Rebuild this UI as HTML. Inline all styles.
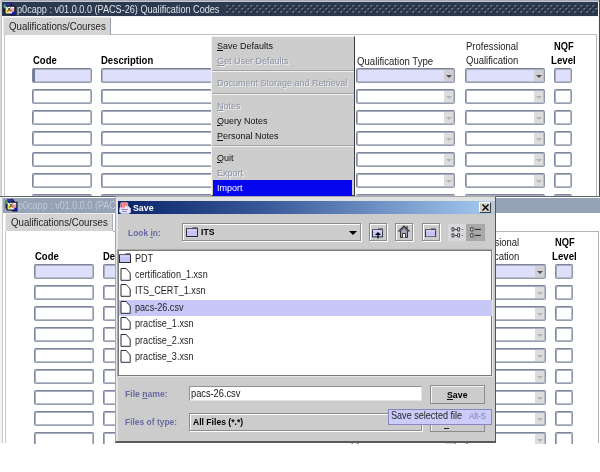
<!DOCTYPE html><html><head><meta charset="utf-8"><style>
*{margin:0;padding:0;box-sizing:border-box}
html,body{width:600px;height:472px;overflow:hidden;background:#fff;font-family:'Liberation Sans',sans-serif}
div{position:absolute}
.t{white-space:pre;transform-origin:0 0}
.fld{border:1px solid #80899e;border-color:#7c859a #8e96a8 #969db0 #80899e;border-radius:2px;box-shadow:inset 1px 1px 0 0 #a8aec0, inset -1px -1px 0 0 #b8bdca}
u{text-decoration:underline;text-underline-offset:1px}
</style></head><body>
<div style="left:0;top:0;width:600px;height:197px;overflow:hidden;background:#fff">
<div style="left:0px;top:0px;width:600px;height:2px;background:#a4a8b0"></div>
<div style="left:0px;top:0px;width:1px;height:197px;background:#d8d8d8"></div>
<div style="left:1px;top:0px;width:1px;height:197px;background:#c4c4c4"></div>
<div style="left:2px;top:2px;width:596px;height:14px;background:#2c394f"></div>
<div style="left:0px;top:1px;width:600px;height:1px;background:#c4c8d0"></div>
<div style="left:598px;top:16px;width:1px;height:181px;background:#fafafa"></div>
<div style="left:599px;top:0px;width:1px;height:197px;background:#4a4a4a"></div>
<svg style="position:absolute;left:0;top:0" width="600" height="16"><defs><pattern id="dp" width="6" height="6" patternUnits="userSpaceOnUse" x="223.5" y="2.2"><rect x="3" y="3" width="1.6" height="1.6" fill="#8e99ae"/><rect x="4.3" y="4.3" width="1.3" height="1.3" fill="#05080f"/><rect x="0" y="0" width="1.6" height="1.6" fill="#8e99ae"/><rect x="1.3" y="1.3" width="1.3" height="1.3" fill="#05080f"/></pattern></defs><rect x="225.5" y="4.5" width="372.5" height="9.5" fill="url(#dp)"/></svg>
<svg style="position:absolute;left:2px;top:2px" width="14" height="14" viewBox="0 0 14 14"><path d="M1.5 3 L4 1 L9 0.8 L10.5 3.5 L13.5 4 L13.5 13.5 L9 13.5 L7 12.5 L3 12.5 L1.5 9 Z" fill="#10142a"/><ellipse cx="2.7" cy="4.2" rx="1.3" ry="2.3" fill="#4aa06a"/><ellipse cx="6.2" cy="2.3" rx="2.8" ry="1.3" fill="#3434b4"/><rect x="3.7" y="4.8" width="8.5" height="6.7" fill="#f4f4f4"/><rect x="3.7" y="7.5" width="3.4" height="3" fill="#e8d848"/><rect x="7.5" y="6.5" width="4.4" height="3.7" fill="#f09494"/><path d="M5.5 5.5 L8.5 9 M8.5 5.5 L5.5 9.5" stroke="#333" stroke-width="0.9"/><rect x="10.2" y="9.8" width="2.8" height="2.8" fill="#1818b0"/></svg>
<div class="t" style="left:17px;top:4.06px;font-size:10.21px;line-height:11.41px;color:#dde2ea;transform:scaleX(0.8929);">p0capp : v01.0.0.0 (PACS-26) Qualification Codes</div>
<div style="left:2px;top:16px;width:596px;height:1px;background:#f4f4f4"></div>
<div style="left:3px;top:17px;width:108px;height:18px;background:#d4d4d4;border-top:1px solid #e8e8e8;border-left:1px solid #e8e8e8;border-top-right-radius:2px"></div>
<div style="left:110px;top:18px;width:1px;height:17px;background:#98a0ae"></div>
<div class="t" style="left:9.2px;top:19.59px;font-size:10.84px;line-height:12.11px;color:#1e1e1e;transform:scaleX(0.8929);">Qualifications/Courses</div>
<div style="left:111px;top:34px;width:486px;height:1px;background:#c0c0c0"></div>
<div style="left:4px;top:35px;width:1px;height:162px;background:#c4c4c4"></div>
<div style="left:596px;top:35px;width:1px;height:162px;background:#b8b8b8"></div>
<div class="t" style="left:33px;top:54.57px;font-size:10.64px;line-height:11.88px;font-weight:bold;color:#000;transform:scaleX(0.8929);">Code</div>
<div class="t" style="left:101px;top:54.57px;font-size:10.64px;line-height:11.88px;font-weight:bold;color:#000;transform:scaleX(0.8929);">Description</div>
<div class="t" style="left:357px;top:54.57px;font-size:10.75px;line-height:12.01px;color:#1a1a1a;transform:scaleX(0.8929);">Qualification Type</div>
<div class="t" style="left:466px;top:41.07px;font-size:10.64px;line-height:11.88px;color:#1a1a1a;transform:scaleX(0.8929);">Professional</div>
<div class="t" style="left:466px;top:54.57px;font-size:10.64px;line-height:11.88px;color:#1a1a1a;transform:scaleX(0.8929);">Qualification</div>
<div class="t" style="left:554px;top:41.07px;font-size:10.42px;line-height:11.63px;font-weight:bold;color:#000;transform:scaleX(0.8929);">NQF</div>
<div class="t" style="left:551px;top:54.17px;font-size:10.86px;line-height:12.14px;font-weight:bold;color:#000;transform:scaleX(0.8929);">Level</div>
<div class="fld" style="left:32px;top:68px;width:60px;height:15px;background:#dedffb"></div>
<div class="fld" style="left:101px;top:68px;width:250px;height:15px;background:#dedffb"></div>
<div class="fld" style="left:356px;top:68px;width:99px;height:15px;background:#dedffb"><div style="right:1px;top:1px;width:9px;height:11px;background:#d0d0d4"></div><div style="right:2.5px;top:5.5px;width:0;height:0;border-left:3px solid transparent;border-right:3px solid transparent;border-top:3px solid #505058"></div></div>
<div class="fld" style="left:465px;top:68px;width:80px;height:15px;background:#dedffb"><div style="right:1px;top:1px;width:9px;height:11px;background:#d0d0d4"></div><div style="right:2.5px;top:5.5px;width:0;height:0;border-left:3px solid transparent;border-right:3px solid transparent;border-top:3px solid #505058"></div></div>
<div class="fld" style="left:554px;top:68px;width:17.5px;height:15px;background:#dedffb"></div>
<div style="left:33px;top:69px;width:2px;height:13px;background:#727a92"></div>
<div class="fld" style="left:32px;top:89px;width:60px;height:15px;background:#fff"></div>
<div class="fld" style="left:101px;top:89px;width:250px;height:15px;background:#fff"></div>
<div class="fld" style="left:356px;top:89px;width:99px;height:15px;background:#fff"><div style="right:1px;top:1px;width:9px;height:11px;background:#dddddd"></div><div style="right:2.5px;top:5.5px;width:0;height:0;border-left:3px solid transparent;border-right:3px solid transparent;border-top:3px solid #b4b4b8"></div></div>
<div class="fld" style="left:465px;top:89px;width:80px;height:15px;background:#fff"><div style="right:1px;top:1px;width:9px;height:11px;background:#dddddd"></div><div style="right:2.5px;top:5.5px;width:0;height:0;border-left:3px solid transparent;border-right:3px solid transparent;border-top:3px solid #b4b4b8"></div></div>
<div class="fld" style="left:554px;top:89px;width:17.5px;height:15px;background:#fff"></div>
<div class="fld" style="left:32px;top:110px;width:60px;height:15px;background:#fff"></div>
<div class="fld" style="left:101px;top:110px;width:250px;height:15px;background:#fff"></div>
<div class="fld" style="left:356px;top:110px;width:99px;height:15px;background:#fff"><div style="right:1px;top:1px;width:9px;height:11px;background:#dddddd"></div><div style="right:2.5px;top:5.5px;width:0;height:0;border-left:3px solid transparent;border-right:3px solid transparent;border-top:3px solid #b4b4b8"></div></div>
<div class="fld" style="left:465px;top:110px;width:80px;height:15px;background:#fff"><div style="right:1px;top:1px;width:9px;height:11px;background:#dddddd"></div><div style="right:2.5px;top:5.5px;width:0;height:0;border-left:3px solid transparent;border-right:3px solid transparent;border-top:3px solid #b4b4b8"></div></div>
<div class="fld" style="left:554px;top:110px;width:17.5px;height:15px;background:#fff"></div>
<div class="fld" style="left:32px;top:131px;width:60px;height:15px;background:#fff"></div>
<div class="fld" style="left:101px;top:131px;width:250px;height:15px;background:#fff"></div>
<div class="fld" style="left:356px;top:131px;width:99px;height:15px;background:#fff"><div style="right:1px;top:1px;width:9px;height:11px;background:#dddddd"></div><div style="right:2.5px;top:5.5px;width:0;height:0;border-left:3px solid transparent;border-right:3px solid transparent;border-top:3px solid #b4b4b8"></div></div>
<div class="fld" style="left:465px;top:131px;width:80px;height:15px;background:#fff"><div style="right:1px;top:1px;width:9px;height:11px;background:#dddddd"></div><div style="right:2.5px;top:5.5px;width:0;height:0;border-left:3px solid transparent;border-right:3px solid transparent;border-top:3px solid #b4b4b8"></div></div>
<div class="fld" style="left:554px;top:131px;width:17.5px;height:15px;background:#fff"></div>
<div class="fld" style="left:32px;top:152px;width:60px;height:15px;background:#fff"></div>
<div class="fld" style="left:101px;top:152px;width:250px;height:15px;background:#fff"></div>
<div class="fld" style="left:356px;top:152px;width:99px;height:15px;background:#fff"><div style="right:1px;top:1px;width:9px;height:11px;background:#dddddd"></div><div style="right:2.5px;top:5.5px;width:0;height:0;border-left:3px solid transparent;border-right:3px solid transparent;border-top:3px solid #b4b4b8"></div></div>
<div class="fld" style="left:465px;top:152px;width:80px;height:15px;background:#fff"><div style="right:1px;top:1px;width:9px;height:11px;background:#dddddd"></div><div style="right:2.5px;top:5.5px;width:0;height:0;border-left:3px solid transparent;border-right:3px solid transparent;border-top:3px solid #b4b4b8"></div></div>
<div class="fld" style="left:554px;top:152px;width:17.5px;height:15px;background:#fff"></div>
<div class="fld" style="left:32px;top:173px;width:60px;height:15px;background:#fff"></div>
<div class="fld" style="left:101px;top:173px;width:250px;height:15px;background:#fff"></div>
<div class="fld" style="left:356px;top:173px;width:99px;height:15px;background:#fff"><div style="right:1px;top:1px;width:9px;height:11px;background:#dddddd"></div><div style="right:2.5px;top:5.5px;width:0;height:0;border-left:3px solid transparent;border-right:3px solid transparent;border-top:3px solid #b4b4b8"></div></div>
<div class="fld" style="left:465px;top:173px;width:80px;height:15px;background:#fff"><div style="right:1px;top:1px;width:9px;height:11px;background:#dddddd"></div><div style="right:2.5px;top:5.5px;width:0;height:0;border-left:3px solid transparent;border-right:3px solid transparent;border-top:3px solid #b4b4b8"></div></div>
<div class="fld" style="left:554px;top:173px;width:17.5px;height:15px;background:#fff"></div>
<div class="fld" style="left:32px;top:194px;width:60px;height:15px;background:#fff"></div>
<div class="fld" style="left:101px;top:194px;width:250px;height:15px;background:#fff"></div>
<div class="fld" style="left:356px;top:194px;width:99px;height:15px;background:#fff"><div style="right:1px;top:1px;width:9px;height:11px;background:#dddddd"></div><div style="right:2.5px;top:5.5px;width:0;height:0;border-left:3px solid transparent;border-right:3px solid transparent;border-top:3px solid #b4b4b8"></div></div>
<div class="fld" style="left:465px;top:194px;width:80px;height:15px;background:#fff"><div style="right:1px;top:1px;width:9px;height:11px;background:#dddddd"></div><div style="right:2.5px;top:5.5px;width:0;height:0;border-left:3px solid transparent;border-right:3px solid transparent;border-top:3px solid #b4b4b8"></div></div>
<div class="fld" style="left:554px;top:194px;width:17.5px;height:15px;background:#fff"></div>
<div style="left:211px;top:36px;width:144px;height:160px;background:#cdcdcd;border-left:1px solid #f0f0f0;border-top:1px solid #f0f0f0;border-right:1px solid #3c3c3c;border-bottom:1px solid #3c3c3c"></div>
<div class="t" style="left:216.5px;top:41.03px;font-size:9.36px;line-height:10.46px;color:#111;transform:scaleX(0.9615);"><u>S</u>ave Defaults</div>
<div class="t" style="left:216.5px;top:56.23px;font-size:9.36px;line-height:10.46px;color:#8e93a3;transform:scaleX(0.9615);text-shadow:1px 1px 0 #f2f2f2;"><u>G</u>et User Defaults</div>
<div class="t" style="left:216.5px;top:78.33px;font-size:9.36px;line-height:10.46px;color:#8e93a3;transform:scaleX(0.9615);text-shadow:1px 1px 0 #f2f2f2;">Document Storage and Retrieval</div>
<div class="t" style="left:216.5px;top:101.03px;font-size:9.36px;line-height:10.46px;color:#8e93a3;transform:scaleX(0.9615);text-shadow:1px 1px 0 #f2f2f2;"><u>N</u>otes</div>
<div class="t" style="left:216.5px;top:115.93px;font-size:9.36px;line-height:10.46px;color:#111;transform:scaleX(0.9615);"><u>Q</u>uery Notes</div>
<div class="t" style="left:216.5px;top:130.73px;font-size:9.36px;line-height:10.46px;color:#111;transform:scaleX(0.9615);"><u>P</u>ersonal Notes</div>
<div class="t" style="left:216.5px;top:152.93px;font-size:9.36px;line-height:10.46px;color:#111;transform:scaleX(0.9615);"><u>Q</u>uit</div>
<div class="t" style="left:216.5px;top:167.83px;font-size:9.36px;line-height:10.46px;color:#8e93a3;transform:scaleX(0.9615);text-shadow:1px 1px 0 #f2f2f2;">Export</div>
<div style="left:212px;top:70px;width:142px;height:1px;background:#a4a4a4"></div>
<div style="left:212px;top:71px;width:142px;height:1px;background:#f0f0f0"></div>
<div style="left:212px;top:93px;width:142px;height:1px;background:#a4a4a4"></div>
<div style="left:212px;top:94px;width:142px;height:1px;background:#f0f0f0"></div>
<div style="left:212px;top:145px;width:142px;height:1px;background:#a4a4a4"></div>
<div style="left:212px;top:146px;width:142px;height:1px;background:#f0f0f0"></div>
<div style="left:213px;top:180px;width:139px;height:15.5px;background:#0505f0"></div>
<div class="t" style="left:216.5px;top:183.13px;font-size:9.36px;line-height:10.46px;color:#fff;transform:scaleX(0.9615);">Import</div>
</div>
<div style="left:0px;top:196px;width:600px;height:1px;background:#5c646c"></div>
<div style="left:0;top:197px;width:600px;height:247px;overflow:hidden;background:#fff">
<div style="left:0;top:-197px;width:600px;height:443px">
<div style="left:0px;top:197px;width:2px;height:246px;background:#f4f4f4"></div>
<div style="left:2px;top:197px;width:1px;height:246px;background:#c8c8c8"></div>
<div style="left:5px;top:231px;width:1px;height:212px;background:#c8c8c8"></div>
<div style="left:3px;top:198px;width:597px;height:15px;background:#96a2b6"></div>
<svg style="position:absolute;left:3.5px;top:198px" width="14" height="14" viewBox="0 0 14 14"><path d="M1.5 3 L4 1 L9 0.8 L10.5 3.5 L13.5 4 L13.5 13.5 L9 13.5 L7 12.5 L3 12.5 L1.5 9 Z" fill="#10142a"/><ellipse cx="2.7" cy="4.2" rx="1.3" ry="2.3" fill="#4aa06a"/><ellipse cx="6.2" cy="2.3" rx="2.8" ry="1.3" fill="#3434b4"/><rect x="3.7" y="4.8" width="8.5" height="6.7" fill="#f4f4f4"/><rect x="3.7" y="7.5" width="3.4" height="3" fill="#e8d848"/><rect x="7.5" y="6.5" width="4.4" height="3.7" fill="#f09494"/><path d="M5.5 5.5 L8.5 9 M8.5 5.5 L5.5 9.5" stroke="#333" stroke-width="0.9"/><rect x="10.2" y="9.8" width="2.8" height="2.8" fill="#1818b0"/></svg>
<div class="t" style="left:18px;top:199.63px;font-size:10.14px;line-height:11.32px;color:#c2c9d5;transform:scaleX(0.8929);">p0capp : v01.0.0.0 (PACS-26) Qualification Codes</div>
<div style="left:5px;top:213px;width:108px;height:18px;background:#d4d4d4;border-top:1px solid #ececec;border-left:1px solid #ececec;border-top-right-radius:2px"></div>
<div style="left:112px;top:214px;width:1px;height:17px;background:#a8b0bc"></div>
<div class="t" style="left:10.7px;top:215.59px;font-size:10.84px;line-height:12.11px;color:#1e1e1e;transform:scaleX(0.8929);">Qualifications/Courses</div>
<div style="left:113px;top:231px;width:485px;height:1px;background:#b4b4b4"></div>
<div style="left:598px;top:231px;width:1px;height:212px;background:#b0b0b0"></div>
<div class="t" style="left:35px;top:250.57px;font-size:10.64px;line-height:11.88px;font-weight:bold;color:#000;transform:scaleX(0.8929);">Code</div>
<div class="t" style="left:103px;top:250.57px;font-size:10.64px;line-height:11.88px;font-weight:bold;color:#000;transform:scaleX(0.8929);">Description</div>
<div class="t" style="left:358px;top:250.57px;font-size:10.75px;line-height:12.01px;color:#1a1a1a;transform:scaleX(0.8929);">Qualification Type</div>
<div class="t" style="left:467px;top:237.07px;font-size:10.64px;line-height:11.88px;color:#1a1a1a;transform:scaleX(0.8929);">Professional</div>
<div class="t" style="left:467px;top:250.57px;font-size:10.64px;line-height:11.88px;color:#1a1a1a;transform:scaleX(0.8929);">Qualification</div>
<div class="t" style="left:555px;top:237.07px;font-size:10.42px;line-height:11.63px;font-weight:bold;color:#000;transform:scaleX(0.8929);">NQF</div>
<div class="t" style="left:552px;top:250.17px;font-size:10.86px;line-height:12.14px;font-weight:bold;color:#000;transform:scaleX(0.8929);">Level</div>
<div class="fld" style="left:34px;top:264px;width:60px;height:15px;background:#dedffb"></div>
<div class="fld" style="left:103px;top:264px;width:250px;height:15px;background:#dedffb"></div>
<div class="fld" style="left:357px;top:264px;width:99px;height:15px;background:#dedffb"><div style="right:1px;top:1px;width:9px;height:11px;background:#d0d0d4"></div><div style="right:2.5px;top:5.5px;width:0;height:0;border-left:3px solid transparent;border-right:3px solid transparent;border-top:3px solid #505058"></div></div>
<div class="fld" style="left:466px;top:264px;width:80px;height:15px;background:#dedffb"><div style="right:1px;top:1px;width:9px;height:11px;background:#d0d0d4"></div><div style="right:2.5px;top:5.5px;width:0;height:0;border-left:3px solid transparent;border-right:3px solid transparent;border-top:3px solid #505058"></div></div>
<div class="fld" style="left:555px;top:264px;width:17.5px;height:15px;background:#dedffb"></div>
<div class="fld" style="left:34px;top:285px;width:60px;height:15px;background:#fff"></div>
<div class="fld" style="left:103px;top:285px;width:250px;height:15px;background:#fff"></div>
<div class="fld" style="left:357px;top:285px;width:99px;height:15px;background:#fff"><div style="right:1px;top:1px;width:9px;height:11px;background:#dddddd"></div><div style="right:2.5px;top:5.5px;width:0;height:0;border-left:3px solid transparent;border-right:3px solid transparent;border-top:3px solid #b4b4b8"></div></div>
<div class="fld" style="left:466px;top:285px;width:80px;height:15px;background:#fff"><div style="right:1px;top:1px;width:9px;height:11px;background:#dddddd"></div><div style="right:2.5px;top:5.5px;width:0;height:0;border-left:3px solid transparent;border-right:3px solid transparent;border-top:3px solid #b4b4b8"></div></div>
<div class="fld" style="left:555px;top:285px;width:17.5px;height:15px;background:#fff"></div>
<div class="fld" style="left:34px;top:306px;width:60px;height:15px;background:#fff"></div>
<div class="fld" style="left:103px;top:306px;width:250px;height:15px;background:#fff"></div>
<div class="fld" style="left:357px;top:306px;width:99px;height:15px;background:#fff"><div style="right:1px;top:1px;width:9px;height:11px;background:#dddddd"></div><div style="right:2.5px;top:5.5px;width:0;height:0;border-left:3px solid transparent;border-right:3px solid transparent;border-top:3px solid #b4b4b8"></div></div>
<div class="fld" style="left:466px;top:306px;width:80px;height:15px;background:#fff"><div style="right:1px;top:1px;width:9px;height:11px;background:#dddddd"></div><div style="right:2.5px;top:5.5px;width:0;height:0;border-left:3px solid transparent;border-right:3px solid transparent;border-top:3px solid #b4b4b8"></div></div>
<div class="fld" style="left:555px;top:306px;width:17.5px;height:15px;background:#fff"></div>
<div class="fld" style="left:34px;top:327px;width:60px;height:15px;background:#fff"></div>
<div class="fld" style="left:103px;top:327px;width:250px;height:15px;background:#fff"></div>
<div class="fld" style="left:357px;top:327px;width:99px;height:15px;background:#fff"><div style="right:1px;top:1px;width:9px;height:11px;background:#dddddd"></div><div style="right:2.5px;top:5.5px;width:0;height:0;border-left:3px solid transparent;border-right:3px solid transparent;border-top:3px solid #b4b4b8"></div></div>
<div class="fld" style="left:466px;top:327px;width:80px;height:15px;background:#fff"><div style="right:1px;top:1px;width:9px;height:11px;background:#dddddd"></div><div style="right:2.5px;top:5.5px;width:0;height:0;border-left:3px solid transparent;border-right:3px solid transparent;border-top:3px solid #b4b4b8"></div></div>
<div class="fld" style="left:555px;top:327px;width:17.5px;height:15px;background:#fff"></div>
<div class="fld" style="left:34px;top:348px;width:60px;height:15px;background:#fff"></div>
<div class="fld" style="left:103px;top:348px;width:250px;height:15px;background:#fff"></div>
<div class="fld" style="left:357px;top:348px;width:99px;height:15px;background:#fff"><div style="right:1px;top:1px;width:9px;height:11px;background:#dddddd"></div><div style="right:2.5px;top:5.5px;width:0;height:0;border-left:3px solid transparent;border-right:3px solid transparent;border-top:3px solid #b4b4b8"></div></div>
<div class="fld" style="left:466px;top:348px;width:80px;height:15px;background:#fff"><div style="right:1px;top:1px;width:9px;height:11px;background:#dddddd"></div><div style="right:2.5px;top:5.5px;width:0;height:0;border-left:3px solid transparent;border-right:3px solid transparent;border-top:3px solid #b4b4b8"></div></div>
<div class="fld" style="left:555px;top:348px;width:17.5px;height:15px;background:#fff"></div>
<div class="fld" style="left:34px;top:369px;width:60px;height:15px;background:#fff"></div>
<div class="fld" style="left:103px;top:369px;width:250px;height:15px;background:#fff"></div>
<div class="fld" style="left:357px;top:369px;width:99px;height:15px;background:#fff"><div style="right:1px;top:1px;width:9px;height:11px;background:#dddddd"></div><div style="right:2.5px;top:5.5px;width:0;height:0;border-left:3px solid transparent;border-right:3px solid transparent;border-top:3px solid #b4b4b8"></div></div>
<div class="fld" style="left:466px;top:369px;width:80px;height:15px;background:#fff"><div style="right:1px;top:1px;width:9px;height:11px;background:#dddddd"></div><div style="right:2.5px;top:5.5px;width:0;height:0;border-left:3px solid transparent;border-right:3px solid transparent;border-top:3px solid #b4b4b8"></div></div>
<div class="fld" style="left:555px;top:369px;width:17.5px;height:15px;background:#fff"></div>
<div class="fld" style="left:34px;top:390px;width:60px;height:15px;background:#fff"></div>
<div class="fld" style="left:103px;top:390px;width:250px;height:15px;background:#fff"></div>
<div class="fld" style="left:357px;top:390px;width:99px;height:15px;background:#fff"><div style="right:1px;top:1px;width:9px;height:11px;background:#dddddd"></div><div style="right:2.5px;top:5.5px;width:0;height:0;border-left:3px solid transparent;border-right:3px solid transparent;border-top:3px solid #b4b4b8"></div></div>
<div class="fld" style="left:466px;top:390px;width:80px;height:15px;background:#fff"><div style="right:1px;top:1px;width:9px;height:11px;background:#dddddd"></div><div style="right:2.5px;top:5.5px;width:0;height:0;border-left:3px solid transparent;border-right:3px solid transparent;border-top:3px solid #b4b4b8"></div></div>
<div class="fld" style="left:555px;top:390px;width:17.5px;height:15px;background:#fff"></div>
<div class="fld" style="left:34px;top:411px;width:60px;height:15px;background:#fff"></div>
<div class="fld" style="left:103px;top:411px;width:250px;height:15px;background:#fff"></div>
<div class="fld" style="left:357px;top:411px;width:99px;height:15px;background:#fff"><div style="right:1px;top:1px;width:9px;height:11px;background:#dddddd"></div><div style="right:2.5px;top:5.5px;width:0;height:0;border-left:3px solid transparent;border-right:3px solid transparent;border-top:3px solid #b4b4b8"></div></div>
<div class="fld" style="left:466px;top:411px;width:80px;height:15px;background:#fff"><div style="right:1px;top:1px;width:9px;height:11px;background:#dddddd"></div><div style="right:2.5px;top:5.5px;width:0;height:0;border-left:3px solid transparent;border-right:3px solid transparent;border-top:3px solid #b4b4b8"></div></div>
<div class="fld" style="left:555px;top:411px;width:17.5px;height:15px;background:#fff"></div>
<div class="fld" style="left:34px;top:432px;width:60px;height:15px;background:#fff"></div>
<div class="fld" style="left:103px;top:432px;width:250px;height:15px;background:#fff"></div>
<div class="fld" style="left:357px;top:432px;width:99px;height:15px;background:#fff"><div style="right:1px;top:1px;width:9px;height:11px;background:#dddddd"></div><div style="right:2.5px;top:5.5px;width:0;height:0;border-left:3px solid transparent;border-right:3px solid transparent;border-top:3px solid #b4b4b8"></div></div>
<div class="fld" style="left:466px;top:432px;width:80px;height:15px;background:#fff"><div style="right:1px;top:1px;width:9px;height:11px;background:#dddddd"></div><div style="right:2.5px;top:5.5px;width:0;height:0;border-left:3px solid transparent;border-right:3px solid transparent;border-top:3px solid #b4b4b8"></div></div>
<div class="fld" style="left:555px;top:432px;width:17.5px;height:15px;background:#fff"></div>
</div></div>
<div style="left:115px;top:196px;width:381px;height:247px;background:#cccccc;border-left:1px solid #a8a8a8;border-top:1px solid #a8a8a8;border-right:1px solid #555;border-bottom:2px solid #5a5a5a"><div style="left:0;top:0;width:2px;height:100%;background:#e4e4e4"></div><div style="left:0;top:0;width:100%;height:4px;background:#e0e0e0"></div></div>
<div style="left:118px;top:201px;width:376px;height:13px;background:linear-gradient(90deg,#0a246a 0%,#3a5a9a 40%,#a6caf0 100%)"></div>
<svg style="position:absolute;left:119px;top:202px" width="12" height="12" viewBox="0 0 12 12"><path d="M1 5.5 L3 4 H9 L11.5 6.5 V10.5 L9.5 11.5 H2.5 L0.5 10 Z" fill="#e8e8ff" stroke="#c8c8f8" stroke-width="0.8"/><rect x="1.2" y="0.2" width="8" height="6" rx="1.5" fill="#f4a0a0"/><path d="M2.5 1.5 V5 M5 1 V4.5 M7 1.5 L8 3" stroke="#e05858" stroke-width="1"/><path d="M2.5 7.5 H9 M3 9.5 H8" stroke="#7a7ab0" stroke-width="0.9"/><path d="M6 4.5 h2.5 v2 h-2.5z" fill="#f8f8ff"/></svg>
<div class="t" style="left:132.7px;top:202.08px;font-size:9.86px;line-height:11.01px;font-weight:bold;color:#fff;transform:scaleX(0.8929);">Save</div>
<div style="left:479px;top:202px;width:12px;height:11px;background:#d4d0c8;border-left:1px solid #fff;border-top:1px solid #fff;border-right:1px solid #404040;border-bottom:1px solid #404040"></div>
<svg style="position:absolute;left:482px;top:204px" width="7" height="7" viewBox="0 0 7 7"><path d="M0.5 0.5 L6.5 6.5 M6.5 0.5 L0.5 6.5" stroke="#000" stroke-width="1.35"/></svg>
<div class="t" style="left:128px;top:227.79px;font-size:9.41px;line-height:10.51px;font-weight:bold;color:#6a6aa4;transform:scaleX(0.8929);">Look <u>i</u>n:</div>
<div style="left:183px;top:224px;width:179px;height:18px;border:1px solid #fff"></div>
<div style="left:182px;top:223px;width:179px;height:18px;border:1px solid #8c8c8c"></div>
<svg style="position:absolute;left:186px;top:227px" width="13" height="10" viewBox="0 0 13 10"><rect x="0.5" y="1.8" width="11" height="7.7" fill="#c4c4f6" stroke="#2a2a3a"/><rect x="1" y="2.3" width="10" height="1.2" fill="#e4e4fc"/><rect x="6.5" y="0.3" width="5" height="1.5" fill="#4a4a60"/></svg>
<div class="t" style="left:201px;top:227.48px;font-size:9.63px;line-height:10.76px;font-weight:bold;color:#000;transform:scaleX(0.8929);">ITS</div>
<div style="left:349px;top:230.5px;width:0;height:0;border-left:4px solid transparent;border-right:4px solid transparent;border-top:4px solid #000"></div>
<div style="left:370px;top:224px;width:18px;height:18px;border:1px solid #fff"></div>
<div style="left:369px;top:223px;width:18px;height:18px;border:1px solid #8c8c8c"></div>
<div style="left:396px;top:224px;width:18px;height:18px;border:1px solid #fff"></div>
<div style="left:395px;top:223px;width:18px;height:18px;border:1px solid #8c8c8c"></div>
<div style="left:422.5px;top:224px;width:18px;height:18px;border:1px solid #fff"></div>
<div style="left:421.5px;top:223px;width:18px;height:18px;border:1px solid #8c8c8c"></div>
<svg style="position:absolute;left:372px;top:228px" width="12" height="9.5" viewBox="0 0 13 10"><rect x="0.5" y="1.8" width="11" height="7.7" fill="#c4c4f6" stroke="#2a2a3a"/><rect x="1" y="2.3" width="10" height="1.2" fill="#e4e4fc"/><rect x="6.5" y="0.3" width="5" height="1.5" fill="#4a4a60"/></svg>
<svg style="position:absolute;left:374px;top:231px" width="8" height="8" viewBox="0 0 8 8"><path d="M4 7.5 V2" stroke="#000" stroke-width="1.2"/><path d="M1 4 L4 1 L7 4 Z" fill="#000"/></svg>
<svg style="position:absolute;left:398px;top:225px" width="12" height="13" viewBox="0 0 12 13"><path d="M0.5 6.5 L6 1 L11.5 6.5" fill="none" stroke="#333" stroke-width="1.2"/><path d="M9 1 V4" stroke="#333" stroke-width="1.2"/><path d="M2.5 6 V12.5 H9.5 V6 L6 2.5 Z" fill="#a4a4c0" stroke="#333"/><path d="M4.5 12.5 V8.5 H7.5 V12.5" fill="#fff" stroke="#333"/></svg>
<svg style="position:absolute;left:424.5px;top:227.5px" width="12" height="9.5" viewBox="0 0 13 10"><rect x="0.5" y="1.8" width="11" height="7.7" fill="#c4c4f6" stroke="#2a2a3a"/><rect x="1" y="2.3" width="10" height="1.2" fill="#e4e4fc"/><rect x="6.5" y="0.3" width="5" height="1.5" fill="#4a4a60"/></svg>
<div style="left:448px;top:223.5px;width:18px;height:17px;background:#d8d8d8"></div>
<div style="left:466px;top:223.5px;width:19px;height:17px;background:#a8a8a8"></div>
<svg style="position:absolute;left:448px;top:223px" width="40" height="18" viewBox="0 0 40 18"><rect x="3.5" y="4.2" width="2.9" height="4.4" rx="1.1" fill="#3c3c4a"/><rect x="4.4" y="5.2" width="1.0999999999999999" height="2.4000000000000004" rx="0.4" fill="#e4e4ee"/><rect x="6.4" y="6.0" width="2.6" height="0.9" fill="#3a3a44"/><rect x="9" y="4.2" width="3.1" height="4.4" rx="1.1" fill="#3c3c4a"/><rect x="9.9" y="5.2" width="1.3" height="2.4000000000000004" rx="0.4" fill="#e4e4ee"/><rect x="13.9" y="6.0" width="1" height="1" fill="#55555f"/><rect x="22.2" y="4.2" width="3.3" height="4.4" rx="1.1" fill="#3c3c4a"/><rect x="23.099999999999998" y="5.2" width="1.4999999999999998" height="2.4000000000000004" rx="0.4" fill="#e4e4ee"/><rect x="26.8" y="5.9" width="6" height="1" fill="#222"/><rect x="3.5" y="10.2" width="2.9" height="4.4" rx="1.1" fill="#3c3c4a"/><rect x="4.4" y="11.2" width="1.0999999999999999" height="2.4000000000000004" rx="0.4" fill="#e4e4ee"/><rect x="6.4" y="12.0" width="2.6" height="0.9" fill="#3a3a44"/><rect x="9" y="10.2" width="3.1" height="4.4" rx="1.1" fill="#3c3c4a"/><rect x="9.9" y="11.2" width="1.3" height="2.4000000000000004" rx="0.4" fill="#e4e4ee"/><rect x="13.9" y="12.0" width="1" height="1" fill="#55555f"/><rect x="22.2" y="10.2" width="3.3" height="4.4" rx="1.1" fill="#3c3c4a"/><rect x="23.099999999999998" y="11.2" width="1.4999999999999998" height="2.4000000000000004" rx="0.4" fill="#e4e4ee"/><rect x="26.8" y="11.9" width="6" height="1" fill="#222"/></svg>
<div style="left:117px;top:249px;width:376px;height:128px;border-left:1px solid #a8a8a8;border-top:1px solid #a8a8a8;border-right:1px solid #e8e8e8;border-bottom:1px solid #e8e8e8"></div>
<div style="left:118px;top:250px;width:374px;height:126px;background:#fff;border:1px solid #7a7a7a"></div>
<div style="left:119px;top:299.5px;width:373px;height:16px;background:#c8c8f8"></div>
<svg style="position:absolute;left:119px;top:253px" width="13" height="10" viewBox="0 0 13 10"><rect x="0.5" y="1.8" width="11" height="7.7" fill="#c4c4f6" stroke="#2a2a3a"/><rect x="1" y="2.3" width="10" height="1.2" fill="#e4e4fc"/><rect x="6.5" y="0.3" width="5" height="1.5" fill="#4a4a60"/></svg>
<div class="t" style="left:134.8px;top:252.78px;font-size:10.19px;line-height:11.38px;color:#1e1e1e;transform:scaleX(0.8929);">PDT</div>
<svg style="position:absolute;left:120.3px;top:267.8px" width="11" height="13" viewBox="0 0 11 13"><path d="M1 0.5 H6.2 L10.2 5 V12.3 H1 Z" fill="#fff" stroke="#2a2a3a" stroke-linejoin="round"/></svg>
<div class="t" style="left:134.8px;top:268.58px;font-size:10.19px;line-height:11.38px;color:#1e1e1e;transform:scaleX(0.8929);">certification_1.xsn</div>
<svg style="position:absolute;left:120.3px;top:284.2px" width="11" height="13" viewBox="0 0 11 13"><path d="M1 0.5 H6.2 L10.2 5 V12.3 H1 Z" fill="#fff" stroke="#2a2a3a" stroke-linejoin="round"/></svg>
<div class="t" style="left:134.8px;top:284.98px;font-size:10.19px;line-height:11.38px;color:#1e1e1e;transform:scaleX(0.8929);">ITS_CERT_1.xsn</div>
<svg style="position:absolute;left:120.3px;top:300.8px" width="11" height="13" viewBox="0 0 11 13"><path d="M1 0.5 H6.2 L10.2 5 V12.3 H1 Z" fill="#fff" stroke="#2a2a3a" stroke-linejoin="round"/></svg>
<div class="t" style="left:134.8px;top:301.58px;font-size:10.19px;line-height:11.38px;color:#1e1e1e;transform:scaleX(0.8929);">pacs-26.csv</div>
<svg style="position:absolute;left:120.3px;top:317.3px" width="11" height="13" viewBox="0 0 11 13"><path d="M1 0.5 H6.2 L10.2 5 V12.3 H1 Z" fill="#fff" stroke="#2a2a3a" stroke-linejoin="round"/></svg>
<div class="t" style="left:134.8px;top:318.08px;font-size:10.19px;line-height:11.38px;color:#1e1e1e;transform:scaleX(0.8929);">practise_1.xsn</div>
<svg style="position:absolute;left:120.3px;top:333.8px" width="11" height="13" viewBox="0 0 11 13"><path d="M1 0.5 H6.2 L10.2 5 V12.3 H1 Z" fill="#fff" stroke="#2a2a3a" stroke-linejoin="round"/></svg>
<div class="t" style="left:134.8px;top:334.58px;font-size:10.19px;line-height:11.38px;color:#1e1e1e;transform:scaleX(0.8929);">practise_2.xsn</div>
<svg style="position:absolute;left:120.3px;top:350.2px" width="11" height="13" viewBox="0 0 11 13"><path d="M1 0.5 H6.2 L10.2 5 V12.3 H1 Z" fill="#fff" stroke="#2a2a3a" stroke-linejoin="round"/></svg>
<div class="t" style="left:134.8px;top:350.98px;font-size:10.19px;line-height:11.38px;color:#1e1e1e;transform:scaleX(0.8929);">practise_3.xsn</div>
<div class="t" style="left:125px;top:389.08px;font-size:9.63px;line-height:10.76px;font-weight:bold;color:#6a6aa2;transform:scaleX(0.8929);">File <u>n</u>ame:</div>
<div style="left:189px;top:386px;width:233px;height:15px;background:#fff;border-left:1px solid #909090;border-top:1px solid #909090;border-right:1px solid #e4e4e4;border-bottom:1px solid #e4e4e4"></div>
<div class="t" style="left:190.8px;top:387.62px;font-size:10.36px;line-height:11.57px;color:#111;transform:scaleX(0.8929);">pacs-26.csv</div>
<div class="t" style="left:125px;top:417.34px;font-size:9.46px;line-height:10.57px;font-weight:bold;color:#6a6aa2;transform:scaleX(0.8929);">Files of type:</div>
<div style="left:190px;top:414px;width:233px;height:18px;border:1px solid #fff"></div>
<div style="left:189px;top:413px;width:233px;height:18px;border:1px solid #8c8c8c"></div>
<div class="t" style="left:192.5px;top:417.18px;font-size:9.63px;line-height:10.76px;font-weight:bold;color:#000;transform:scaleX(0.8929);">All Files (*.*)</div>
<div style="left:430px;top:384.5px;width:55px;height:19px;border:1px solid #8c8c8c;box-shadow:inset 1px 1px 0 #f4f4f4"></div>
<div style="left:430px;top:412.5px;width:55px;height:19px;border:1px solid #8c8c8c;box-shadow:inset 1px 1px 0 #f4f4f4"></div>
<div class="t" style="left:447px;top:389.08px;font-size:9.86px;line-height:11.01px;font-weight:bold;color:#000;transform:scaleX(0.8929);"><u>S</u>ave</div>
<div style="left:444px;top:428px;width:5px;height:1.2px;background:#222"></div>
<div style="left:388px;top:408.5px;width:104px;height:16.5px;background:#ccccfa;border:1px solid #8888c0"></div>
<div class="t" style="left:390.5px;top:410.40px;font-size:10.17px;line-height:11.36px;color:#1e1e1e;transform:scaleX(0.8929);">Save selected file</div>
<div class="t" style="left:469px;top:411.59px;font-size:8.85px;line-height:9.88px;color:#7e7eae;transform:scaleX(0.8929);">Alt-S</div>
</body></html>
